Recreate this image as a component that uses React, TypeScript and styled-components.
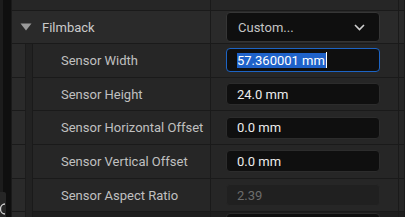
import React from "react";
import styled, { createGlobalStyle, css } from "styled-components";

const Global = createGlobalStyle`
  html, body { margin: 0; padding: 0; background: #111111; }
  body { font-family: Roboto, "Noto Sans", "Liberation Sans", sans-serif; }
  * { box-sizing: border-box; }
`;

const Root = styled.div`
  display: flex;
  width: 405px;
  height: 217px;
  overflow: hidden;
  background: #111111;
`;

const Gutter = styled.div`
  width: 11px;
  flex: none;
  display: flex;
  flex-direction: column;
  justify-content: flex-end;
  background: linear-gradient(to right, #1c1c1c 0 3px, #0f0f0f 3px 11px);
  position: relative;
`;

const GutterTab = styled.div`
  width: 6px;
  height: 25px;
  background: #262626;
  border-top-right-radius: 2px;
  overflow: hidden;
  display: flex;
  align-items: flex-end;
  padding-bottom: 2px;
`;

const Panel = styled.div`
  flex: 1;
  display: flex;
  flex-direction: column;
  border-left: 1px solid #1a1a1a;
  background: #1a1a1a;
`;

const Row = styled.div<{ $h: number; $bg?: string }>`
  display: flex;
  height: ${(p) => p.$h}px;
  flex: none;
  border-bottom: 1px solid #1a1a1a;
  background: ${(p) => p.$bg ?? "#262626"};
`;

const NameCell = styled.div<{ $pad?: number }>`
  width: 199px;
  flex: none;
  display: flex;
  align-items: center;
  padding-left: ${(p) => p.$pad ?? 0}px;
  border-right: 1px solid #1a1a1a;
`;

const Indent = styled.div`
  width: 21px;
  flex: none;
  align-self: stretch;
  display: flex;
  margin-bottom: -1px;
`;

const IndentA = styled.div`
  width: 14px;
  background: #2a2a2a;
  border-right: 1.5px solid #1c1c1c;
  border-bottom: 1px solid #1a1a1a;
`;

const IndentB = styled.div`
  width: 7px;
  background: #222222;
  border-right: 1px solid #1a1a1a;
`;

const ValueCell = styled.div`
  width: 188px;
  flex: none;
  display: flex;
  align-items: center;
  padding-left: 15px;
  border-right: 1px solid #1a1a1a;
`;

const Tail = styled.div`
  flex: 1;
  border-right: 1px solid #1a1a1a;
`;

const Label = styled.span`
  color: #c0c0c0;
  font-size: 13px;
  padding-left: 28px;
  white-space: nowrap;
`;

const CatLabel = styled.span`
  color: #cacaca;
  font-size: 13px;
  margin-left: 10px;
`;

const Dropdown = styled.div`
  width: 154px;
  height: 30px;
  background: #0f0f0f;
  border: 1px solid #363636;
  border-radius: 4px;
  display: flex;
  align-items: center;
  justify-content: space-between;
  padding: 0 14px 0 11px;
  color: #c4c4c4;
  font-size: 13px;
`;

const Input = styled.div<{ $focus?: boolean; $disabled?: boolean }>`
  width: 154px;
  height: 22px;
  background: #0f0f0f;
  border: 1px solid #2c2c2c;
  border-radius: 4px;
  display: flex;
  align-items: center;
  padding-left: 10px;
  color: #ececec;
  font-size: 13px;
  white-space: nowrap;
  ${(p) =>
    p.$focus &&
    css`
      height: 24px;
      border: 1.5px solid #1d64c4;
      padding-left: 10px;
    `}
  ${(p) =>
    p.$disabled &&
    css`
      background: #202020;
      border-color: #262626;
      color: #6c6c6c;
    `}
`;

const Selected = styled.span`
  background: #1f62c9;
  color: #ffffff;
  line-height: 15px;
  padding: 0 1px 0 0;
`;

const Caret = styled.span`
  display: inline-block;
  width: 1.5px;
  height: 16px;
  background: #ffffff;
`;

const PartialInput = styled.div`
  width: 154px;
  height: 22px;
  margin-top: 1px;
  margin-left: 15px;
  background: #0f0f0f;
  border: 1px solid #2c2c2c;
  border-radius: 4px;
`;

const Triangle = () => (
  <svg width="12" height="8" viewBox="0 0 12 8">
    <path d="M0.5 0.5 L11.5 0.5 L6 7.5 Z" fill="#9a9a9a" />
  </svg>
);

const Chevron = () => (
  <svg width="11" height="7" viewBox="0 0 11 7">
    <path d="M1 1 L5.5 5.5 L10 1" fill="none" stroke="#cfcfcf" strokeWidth="1.6" />
  </svg>
);

const props = [
  { name: "Sensor Width", value: "57.360001 mm", focus: true },
  { name: "Sensor Height", value: "24.0 mm" },
  { name: "Sensor Horizontal Offset", value: "0.0 mm" },
  { name: "Sensor Vertical Offset", value: "0.0 mm" },
  { name: "Sensor Aspect Ratio", value: "2.39", disabled: true },
];

export default function App() {
  return (
    <>
      <Global />
      <Root>
        <Gutter>
          <GutterTab>
            <svg width="6" height="12" viewBox="0 0 6 12">
              <path d="M5 1 A4.5 5 0 0 0 5 11" fill="none" stroke="#d0d0d0" strokeWidth="1.3" />
            </svg>
          </GutterTab>
        </Gutter>
        <Panel>
          <Row $h={11} $bg="#262626">
            <NameCell />
            <ValueCell />
            <Tail />
          </Row>
          <Row $h={33} $bg="#2a2a2a">
            <NameCell $pad={8}>
              <Triangle />
              <CatLabel>Filmback</CatLabel>
            </NameCell>
            <ValueCell>
              <Dropdown>
                <span>Custom...</span>
                <Chevron />
              </Dropdown>
            </ValueCell>
            <Tail />
          </Row>
          {props.map((p) => (
            <Row key={p.name} $h={33.7}>
              <NameCell>
                <Indent>
                  <IndentA />
                  <IndentB />
                </Indent>
                <Label>{p.name}</Label>
              </NameCell>
              <ValueCell>
                <Input $focus={p.focus} $disabled={p.disabled}>
                  {p.focus ? (
                    <>
                      <Selected>{p.value}</Selected>
                      <Caret />
                    </>
                  ) : (
                    p.value
                  )}
                </Input>
              </ValueCell>
              <Tail />
            </Row>
          ))}
          <Row $h={20} $bg="#1e1e1e">
            <NameCell>
              <Indent>
                <IndentA />
                <IndentB />
              </Indent>
            </NameCell>
            <ValueCell style={{ alignItems: "flex-start", paddingLeft: 0 }}>
              <PartialInput />
            </ValueCell>
            <Tail />
          </Row>
        </Panel>
      </Root>
    </>
  );
}
